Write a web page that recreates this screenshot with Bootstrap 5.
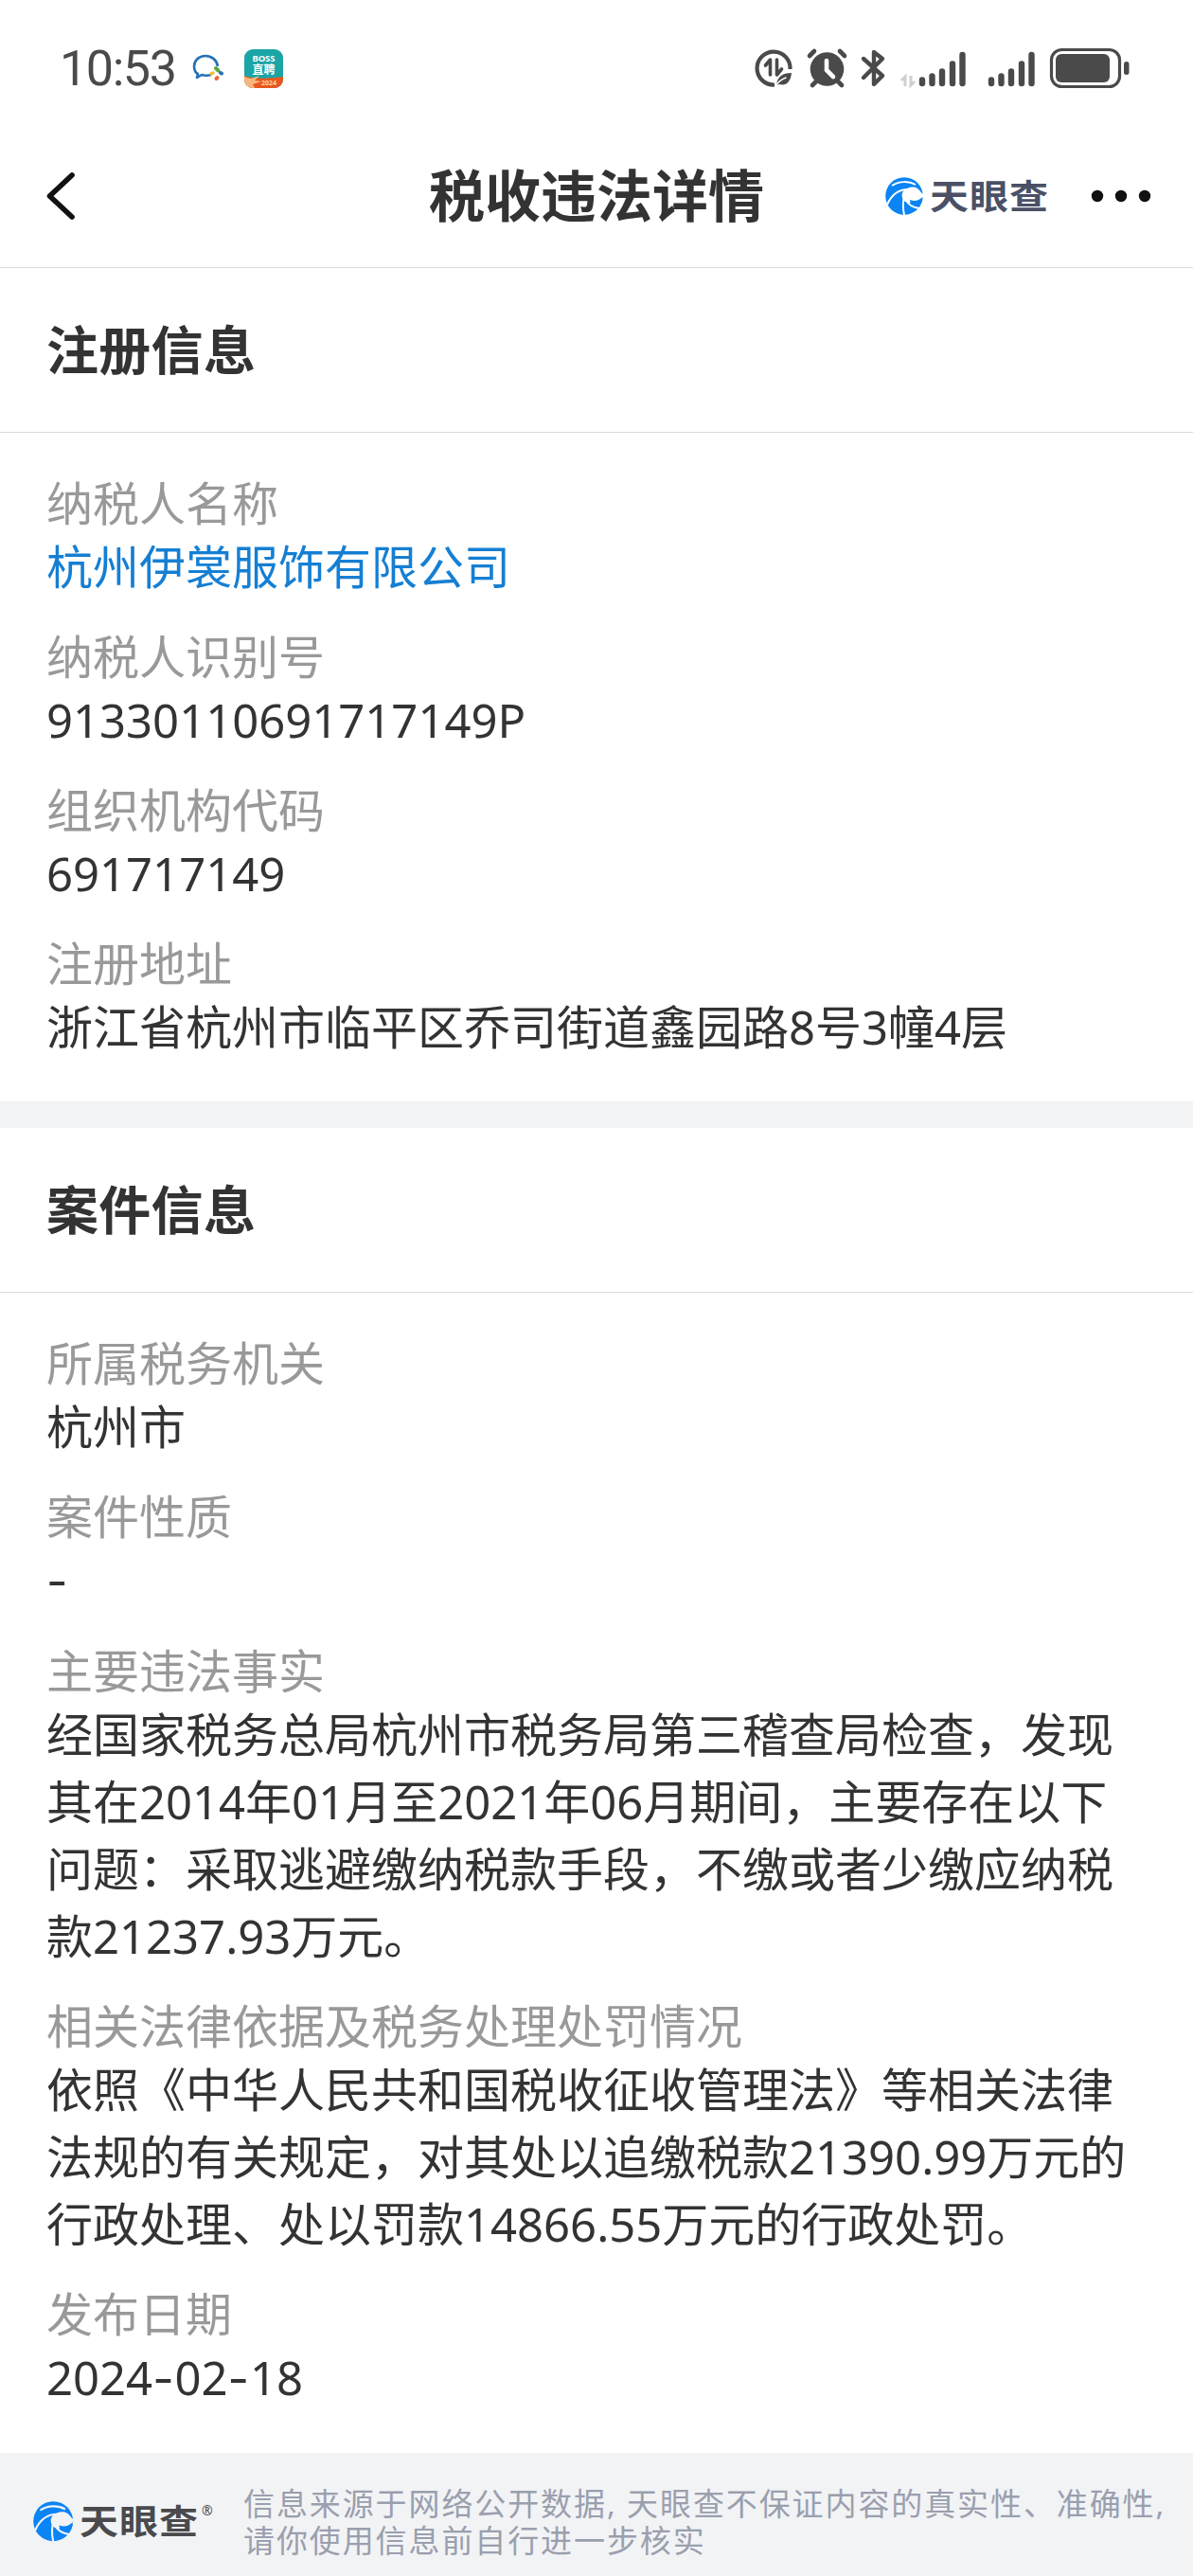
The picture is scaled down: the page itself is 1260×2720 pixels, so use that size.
<!DOCTYPE html>
<html lang="zh-CN">
<head>
<meta charset="utf-8">
<meta name="viewport" content="width=device-width, initial-scale=1">
<title>税收违法详情</title>
<link href="https://cdn.jsdelivr.net/npm/bootstrap@5.3.0/dist/css/bootstrap.min.css" rel="stylesheet">
<style>
  body { font-family: "Noto Sans", "Noto Sans CJK SC", sans-serif; color: #333; background: #fff; overflow-x: hidden; }
  .screen { width: 1260px; height: 2720px; overflow: hidden; }
  svg { display: block; flex: none; overflow: visible; }
  .status-bar { height: 132px; padding: 12px 64px 0 63px; color: #4a4a4a; }
  .clock { font-family: Roboto, sans-serif; font-size: 52px; font-weight: 400; line-height: 60px; width: 136px; letter-spacing: -1.4px; padding-top: 2px; white-space: nowrap; }
  .boss-tile { margin-left: 21px; }
  .app-bar { height: 151px; padding: 0 44px; border-bottom: 1px solid #dcdcdc; display: grid; grid-template-columns: 1fr auto 1fr; }
  .app-title { font-size: 59px; line-height: 80px; font-weight: 700; margin: -2px 0 0; }
  .more-dots { margin-left: 45px; }
  .section-head { height: 174px; padding: 0 50px 2px 49px; border-bottom: 1px solid #dcdcdc; }
  .section-head h2 { font-size: 55px; font-weight: 700; line-height: 80px; letter-spacing: .3px; margin: 0; }
  .fields { padding: 42px 50px 43px 49px; margin: 0; }
  .fields dt { font-size: 49px; line-height: 64px; font-weight: 400; color: #999; }
  .fields dd { font-size: 49px; line-height: 71px; margin: 0 0 27px; white-space: nowrap; }
  .fields dd:last-child { margin-bottom: 0; }
  .fields a { color: #157fd3; }
  .dash { font-family: Inter, sans-serif; letter-spacing: .8px; }
  .divider { height: 28px; background: #f2f3f5; }
  .source-bar { background: #f2f3f5; padding: 16px 0 0 35px; color: #9a9fae; }
  .source-bar p { font-size: 33px; line-height: 39px; letter-spacing: 1.9px; white-space: nowrap; margin: 0 0 0 32px; }
  .wordmark { font-family: "Noto Sans CJK SC", sans-serif; font-weight: 700; font-size: 41px; }
</style>
</head>
<body>
<svg width="0" height="0" class="position-absolute" aria-hidden="true">
  <defs>
    <g id="swirl">
      <circle cx="20" cy="20" r="19.800" fill="#0b84f5"/>
      <path d="M19 15c4-4 10-6 15-3 3 2 4 5 6 6v4c-3 4-7 5-11 4-2 1-4 2-6 1-5-2-7-8-4-12Z" fill="var(--bg)"/>
      <path d="M26 24c5 2 9 1 13.500-3C39 26 36 30 31 30c-3 0-5-3-5-6Z" fill="#0b84f5"/>
      <path d="M7 9C15 4 25 4 32 8M2 29C6 20 13 13 24 13M20 40c-2-9-1-17 1-22M36 33c-7-1-12-4-14-9" fill="none" stroke="var(--bg)" stroke-width="2"/>
    </g>
    <g id="bars" stroke="#4a4a4a" stroke-width="6.4" stroke-linecap="round">
      <path d="M4 33v3.500M14.500 29v7.500M25 24v12.500M36 16v20.500M46.500 6.500v30"/>
    </g>
  </defs>
</svg>
<main class="screen d-flex flex-column">
  <header class="status-bar d-flex align-items-center">
    <span class="clock">10:53</span>
    <svg width="34" height="30" viewBox="0 0 34 30" class="ms-1" fill="none">
      <path d="M27 13C26 6 20 2 14 2 7 2 2 7 2 13c0 4 2 7 4 8l-1 4 5-3c3 1 6 1 10 0" stroke="#2671b6" stroke-width="2.600" stroke-linejoin="round"/>
      <path d="M25 15l2.500 2.500" stroke="#58a83f" stroke-width="4" stroke-linecap="round"/>
      <path d="M30 20l1 .5" stroke="#2671b6" stroke-width="4" stroke-linecap="round"/>
      <path d="M25.500 26l1-1" stroke="#e86b35" stroke-width="4" stroke-linecap="round"/>
      <path d="M20 21l2-1" stroke="#f1bd37" stroke-width="3.500" stroke-linecap="round"/>
    </svg>
    <svg width="41" height="41" viewBox="0 0 41 41" class="boss-tile">
      <defs><clipPath id="tile"><rect width="41" height="41" rx="9"/></clipPath></defs>
      <g clip-path="url(#tile)">
        <rect width="41" height="41" fill="#1ba5a6"/>
        <path d="M0 28c12 4 26 3 41 1v12H0Z" fill="#e9571f"/>
        <path d="M0 29l7 2 9-3-5 5 7 1-9 3 2 4H0Z" fill="#f7b77c"/>
        <text x="20.500" y="13" text-anchor="middle" font-family="Noto Sans" font-weight="700" font-size="9.500" fill="#fff" textLength="24">BOSS</text>
        <text x="20.500" y="25.500" text-anchor="middle" font-family="Noto Sans CJK SC" font-weight="700" font-size="12" fill="#fff">直聘</text>
        <text x="18" y="38" font-family="Noto Sans" font-weight="700" font-size="7" fill="#ffd2b5">2024</text>
      </g>
    </svg>
    <div class="ms-auto">
      <svg width="400" height="44" viewBox="796 50 400 44">
        <g fill="none" stroke="#4a4a4a" stroke-linecap="round">
          <path d="M834.500 73A17.500 17.500 0 1 0 818 89.500" stroke-width="4.200" stroke-linecap="butt"/>
          <path d="M813.500 79V63l-5 6M820.500 63v16l5-6" stroke-width="3.600" stroke-linejoin="round"/>
          <path d="M820 90c1-9 6-13 16-13-1 10-6 14-13 12" fill="#4a4a4a" stroke="none"/>
          <path d="M819 91c3-5 6-7 11-9" stroke="#fff" stroke-width="1.500"/>
        </g>
        <circle cx="873.500" cy="73" r="17.800" fill="#4a4a4a"/>
        <g fill="none" stroke="#4a4a4a" stroke-width="4.600" stroke-linecap="round">
          <path d="M855 59l5-5M887 54l5 5M862 86l-4 4M885 86l4 4"/>
          <path d="M873 64v10l7 7" stroke="#fff"/>
          <path d="M912 62l20 18-9 9V55l9 7-20 20" stroke-width="4.400" stroke-linejoin="round"/>
        </g>
        <path d="M956 91V81l-4 4M962 80v10l4-4" fill="none" stroke="#cfcfcf" stroke-width="3"/>
        <use href="#bars" x="970" y="51.500"/>
        <use href="#bars" x="1043" y="51.500"/>
        <rect x="1110.500" y="52.500" width="72" height="39" rx="11" fill="none" stroke="#4a4a4a" stroke-width="3.200"/>
        <rect x="1115" y="57" width="57" height="30" rx="6" fill="#4a4a4a"/>
        <rect x="1187" y="65" width="5.500" height="14" rx="2.700" fill="#4a4a4a"/>
      </svg>
    </div>
  </header>

  <nav class="app-bar align-items-center">
    <a href="#" aria-label="返回" class="ms-1">
      <svg width="32" height="50" viewBox="0 0 32 50"><path d="M28 3L4.500 25l23.500 22" fill="none" stroke="#111" stroke-width="5.600" stroke-linecap="round" stroke-linejoin="round"/></svg>
    </a>
    <h1 class="app-title">税收违法详情</h1>
    <div class="d-flex align-items-center justify-content-end">
      <svg width="172" height="44" viewBox="0 0 172 44" style="--bg:#fff">
        <use href="#swirl" y="2"/>
        <text class="wordmark" transform="translate(47 36) scale(1 .9)" fill="#4b5066" textLength="125">天眼查</text>
      </svg>
      <svg width="64" height="14" viewBox="0 0 64 14" fill="#111" class="more-dots"><circle cx="7" cy="7" r="6.200"/><circle cx="32" cy="7" r="6.200"/><circle cx="57" cy="7" r="6.200"/></svg>
    </div>
  </nav>

  <section>
    <div class="section-head d-flex align-items-center"><h2>注册信息</h2></div>
    <dl class="fields">
      <dt>纳税人名称</dt>
      <dd><a href="#" class="text-decoration-none">杭州伊裳服饰有限公司</a></dd>
      <dt>纳税人识别号</dt>
      <dd>91330110691717149P</dd>
      <dt>组织机构代码</dt>
      <dd>691717149</dd>
      <dt>注册地址</dt>
      <dd>浙江省杭州市临平区乔司街道鑫园路8号3幢4层</dd>
    </dl>
  </section>

  <div class="divider"></div>

  <section>
    <div class="section-head d-flex align-items-center"><h2>案件信息</h2></div>
    <dl class="fields">
      <dt>所属税务机关</dt>
      <dd>杭州市</dd>
      <dt>案件性质</dt>
      <dd><span class="dash">-</span></dd>
      <dt>主要违法事实</dt>
      <dd>经国家税务总局杭州市税务局第三稽查局检查，发现<br>其在2014年01月至2021年06月期间，主要存在以下<br>问题：采取逃避缴纳税款手段，不缴或者少缴应纳税<br>款21237.93万元。</dd>
      <dt>相关法律依据及税务处理处罚情况</dt>
      <dd>依照《中华人民共和国税收征收管理法》等相关法律<br>法规的有关规定，对其处以追缴税款21390.99万元的<br>行政处理、处以罚款14866.55万元的行政处罚。</dd>
      <dt>发布日期</dt>
      <dd>2024<span class="dash">-</span>02<span class="dash">-</span>18</dd>
    </dl>
  </section>

  <footer class="source-bar flex-grow-1 d-flex align-items-center">
    <svg width="190" height="48" viewBox="0 0 190 48" style="--bg:#f2f3f5">
      <use href="#swirl" transform="translate(0 2) scale(1.060)"/>
      <text class="wordmark" transform="translate(49 36.500) scale(1 .9)" fill="#4a4a4c" textLength="125">天眼查</text>
      <text x="178" y="17" font-size="14" font-family="Noto Sans" fill="#4a4a4c">®</text>
    </svg>
    <p>信息来源于网络公开数据, 天眼查不保证内容的真实性、准确性,<br>请你使用信息前自行进一步核实</p>
  </footer>
</main>
<script src="https://cdn.jsdelivr.net/npm/bootstrap@5.3.0/dist/js/bootstrap.bundle.min.js"></script>
</body>
</html>
